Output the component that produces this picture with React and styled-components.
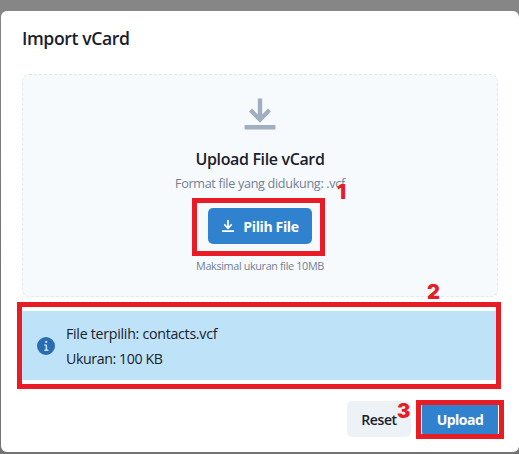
import React from 'react';
import styled, { createGlobalStyle } from 'styled-components';

const GlobalStyle = createGlobalStyle`
  * {
    box-sizing: border-box;
  }

  body {
    margin: 0;
    overflow: hidden;
    font-family: 'Open Sans', 'Noto Sans', sans-serif;
    color: #1a202c;
  }

  h2,
  h3,
  p {
    margin: 0;
  }
`;

const StyledOverlay = styled.div`
  height: 454px;
  padding: 11px 0 2px 1px;
  background: linear-gradient(#868686, #868686 11px, #737373 60%);
`;

const StyledModal = styled.section`
  display: flex;
  flex-direction: column;
  height: 441px;
  padding: 0 21px;
  border-radius: 6px;
  background-color: #fff;
`;

const StyledTitle = styled.h2`
  height: 63px;
  padding-top: 14px;
  font-size: 17.6px;
  font-weight: 600;
  line-height: 27px;
  letter-spacing: -0.4px;
`;

const StyledDropzone = styled.div`
  display: flex;
  flex-direction: column;
  align-items: center;
  height: 223px;
  padding-top: 21px;
  border: 1px dashed #e2e8f0;
  border-radius: 7px;
  background-color: #f7fafc;

  > svg {
    color: #a0aec0;
  }

  h3 {
    margin-top: 15px;
    font-size: 16px;
    font-weight: 600;
    line-height: 25px;
    letter-spacing: -0.36px;
  }
`;

const StyledHint = styled.p`
  height: 19px;
  margin-top: ${({ $top }) => $top}px;
  color: #718096;
  font-size: ${({ $size }) => $size}px;
  line-height: 19px;
  letter-spacing: ${({ $spacing }) => $spacing}px;
  white-space: nowrap;
`;

const StyledMarked = styled.div`
  position: relative;
  margin-top: ${({ $top = 0 }) => $top}px;
`;

// Red frame drawn over the part that a step points at
const StyledFrame = styled.span`
  position: absolute;
  inset: ${({ $inset }) => $inset};
  border: 5px solid #e81c24;
  pointer-events: none;
`;

const StyledNumber = styled.span`
  position: absolute;
  top: ${({ $top }) => $top}px;
  left: ${({ $left }) => $left}px;
  color: #e81c24;
  font-family: Inter, 'Liberation Sans', sans-serif;
  font-size: 20px;
  font-weight: 900;
  line-height: 20px;
`;

const StyledButton = styled.button`
  display: flex;
  align-items: center;
  justify-content: center;
  gap: 8px;
  width: ${({ $width }) => $width}px;
  height: 36px;
  padding: 0;
  border: 0;
  border-radius: 5px;
  background-color: ${({ $primary }) => ($primary ? '#3182ce' : '#edf2f7')};
  color: ${({ $primary }) => ($primary ? '#fff' : '#1a202c')};
  font-family: inherit;
  font-size: 14px;
  font-weight: ${({ $primary }) => ($primary ? 700 : 600)};
  letter-spacing: ${({ $spacing }) => $spacing}px;
  white-space: nowrap;
`;

const StyledAlert = styled.div`
  display: flex;
  align-items: center;
  gap: 11px;
  height: 69px;
  padding: 0 15px;
  background-color: #bee3f8;

  svg {
    flex: none;
    color: #2b6cb0;
  }
`;

const StyledAlertLine = styled.p`
  font-size: 14.2px;
  line-height: 25px;
  letter-spacing: ${({ $spacing }) => $spacing}px;
  white-space: nowrap;
`;

const StyledFooter = styled.footer`
  display: flex;
  justify-content: flex-end;
  gap: 11px;
  margin-top: 21px;
`;

const DownloadIcon = ({ size }) => (
  <svg width={size} height={size} viewBox="0 0 14 14" fill="currentColor">
    <path d="M11.2857,6.05714 L10.08571,4.85714 L7.85714,7.14786 L7.85714,1 L6.14286,1 L6.14286,7.14786 L3.91429,4.85714 L2.71429,6.05714 L7,10.42857 L11.2857,6.05714 Z M1,11.2857 L1,13 L13,13 L13,11.2857 L1,11.2857 Z" />
  </svg>
);

const InfoIcon = () => (
  <svg width="18" height="18" viewBox="0 0 24 24" fill="currentColor">
    <path d="M12,0A12,12,0,1,0,24,12,12.013,12.013,0,0,0,12,0Zm.25,5a1.5,1.5,0,1,1-1.5,1.5A1.5,1.5,0,0,1,12.25,5ZM14.5,18.5h-4a1,1,0,0,1,0-2h.75a.25.25,0,0,0,.25-.25v-4.5a.25.25,0,0,0-.25-.25H10.5a1,1,0,0,1,0-2h1a2,2,0,0,1,2,2v4.75a.25.25,0,0,0,.25.25h.75a1,1,0,1,1,0,2Z" />
  </svg>
);

const App = () => (
  <StyledOverlay>
    <GlobalStyle />
    <StyledModal>
      <StyledTitle>Import vCard</StyledTitle>

      <StyledDropzone>
        <DownloadIcon size={36} />
        <h3>Upload File vCard</h3>
        <StyledHint $top={2} $size={12.6} $spacing={-0.3}>
          Format file yang didukung: .vcf
        </StyledHint>
        <StyledMarked $top={15}>
          <StyledButton $primary $width={104} $spacing={-0.35}>
            <DownloadIcon size={14} />
            Pilih File
          </StyledButton>
          <StyledFrame $inset="-10px -13px -12px -16px" />
          <StyledNumber $top={-26} $left={129}>
            1
          </StyledNumber>
        </StyledMarked>
        <StyledHint $top={12} $size={10.8} $spacing={-0.35}>
          Maksimal ukuran file 10MB
        </StyledHint>
      </StyledDropzone>

      <StyledMarked $top={14}>
        <StyledAlert>
          <InfoIcon />
          <div>
            <StyledAlertLine $spacing={-0.27}>File terpilih: contacts.vcf</StyledAlertLine>
            <StyledAlertLine $spacing={-0.4}>Ukuran: 100 KB</StyledAlertLine>
          </div>
        </StyledAlert>
        <StyledFrame $inset="-9px -3px -9px -5px" />
        <StyledNumber $top={-29} $left={405}>
          2
        </StyledNumber>
      </StyledMarked>

      <StyledFooter>
        <StyledButton $width={64} $spacing={-0.4}>
          Reset
        </StyledButton>
        <StyledMarked>
          <StyledButton $primary $width={76} $spacing={-0.5}>
            Upload
          </StyledButton>
          <StyledFrame $inset="-1px -6px -2px -6px" />
          <StyledNumber $top={0} $left={-25}>
            3
          </StyledNumber>
        </StyledMarked>
      </StyledFooter>
    </StyledModal>
  </StyledOverlay>
);

export default App;
